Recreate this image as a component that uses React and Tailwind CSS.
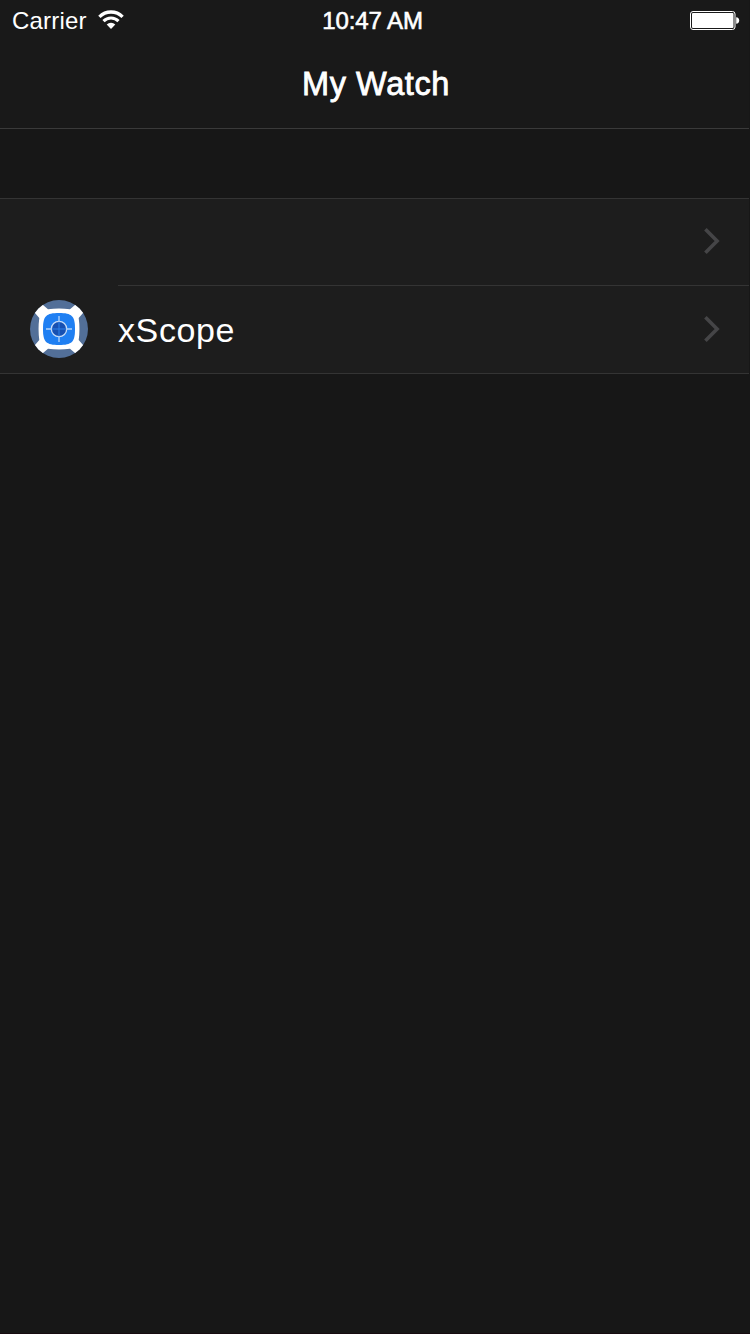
function WifiIcon() {
  return (
    <svg className="ml-[11px] block h-[20px] w-[26px]" viewBox="0 0 26 20" fill="none" stroke="#fff">
      <path d="M1.4 6.8A16.4 16.4 0 0 1 24.6 6.8" strokeWidth="3.3" />
      <path d="M5.5 11.1A10.6 10.6 0 0 1 20.5 11.1" strokeWidth="3.1" />
      <path d="M8.7 14.6A6.1 6.1 0 0 1 17.3 14.6L13 19Z" fill="#fff" stroke="none" />
    </svg>
  );
}

function BatteryIcon() {
  return (
    <svg className="block h-[20px] w-[50px]" viewBox="0 0 50 20">
      <rect x="0.5" y="1.5" width="44.5" height="18" rx="2.5" fill="none" stroke="#fff" />
      <rect x="2" y="3" width="41.5" height="15" rx="1" fill="#fff" />
      <path d="M46.2 7.2Q49.2 7.6 49.2 10.5T46.2 13.8Z" fill="#fff" />
    </svg>
  );
}

function Chevron() {
  return (
    <svg className="block h-[28px] w-[18px]" viewBox="0 0 18 28" fill="none" stroke="#454547" strokeWidth="3.6">
      <path d="M2.4 2.3L14.1 14L2.4 25.7" />
    </svg>
  );
}

function ScopeIcon() {
  return (
    <svg className="block h-[58px] w-[58px]" viewBox="0 0 58 58">
      <circle cx="29" cy="29" r="29" fill="#526f98" />
      <clipPath id="disc">
        <circle cx="29" cy="29" r="29" />
      </clipPath>
      <g clipPath="url(#disc)">
        <path
          d="M6 -1L18 9.3Q29 7.8 40 9.3L52 -1L59 6L48.7 18Q50.2 29 48.7 40L59 52L52 59L40 48.7Q29 50.2 18 48.7L6 59L-1 52L9.3 40Q7.8 29 9.3 18L-1 6Z"
          fill="#fff"
        />
      </g>
      <path
        d="M29 13C42 13 45 16 45 29S42 45 29 45S13 42 13 29S16 13 29 13Z"
        fill="#1f7ff2"
      />
      <circle cx="29" cy="29" r="7.7" fill="#1650b2" stroke="#c5dcf8" strokeWidth="1.3" />
      <path d="M29 21.5V36.5M21.5 29H36.5" stroke="#2d80e8" />
      <path d="M29 16V22M29 36V42M16 29H22M36 29H42" stroke="#b4d3f9" strokeWidth="1.3" />
    </svg>
  );
}

export default function App() {
  return (
    <div className="flex h-[1334px] w-[750px] flex-col overflow-hidden border-b border-[#160b10] bg-[#171717] font-['Liberation_Sans',Arial,sans-serif] text-white">
      <header className="mr-px h-[129px] border-b border-[#3a3a3a] bg-[#191919]">
        <div className="grid h-[40px] grid-cols-[1fr_auto_1fr] items-center">
          <div className="flex items-center pl-[12px]">
            <span className="pt-[2px] text-[24px] leading-[38px] tracking-[0.2px]">Carrier</span>
            <WifiIcon />
          </div>
          <span className="pt-[2px] pr-[4px] text-[24px] leading-[38px] tracking-[-0.1px] [-webkit-text-stroke:0.6px_white]">10:47 AM</span>
          <div className="flex justify-end pr-[9px]">
            <BatteryIcon />
          </div>
        </div>
        <h1 className="pl-[3px] text-center text-[32.5px] leading-[88px] font-normal tracking-[0.6px] [-webkit-text-stroke:0.8px_white]">My Watch</h1>
      </header>
      <main className="pt-[69px] pr-px">
        <ul className="border-y border-[#343434] bg-[#1d1d1d]">
          <li className="pl-[118px]">
            <div className="flex h-[87px] items-center justify-end border-b border-[#343434] pr-[28px] pb-[2px]">
              <Chevron />
            </div>
          </li>
          <li className="flex h-[87px] items-center pr-[28px] pb-[2px] pl-[30px]">
            <ScopeIcon />
            <span className="ml-[30px] flex-1 pt-[2px] text-[34px] leading-[40px] tracking-[0.6px]">xScope</span>
            <Chevron />
          </li>
        </ul>
      </main>
    </div>
  );
}
